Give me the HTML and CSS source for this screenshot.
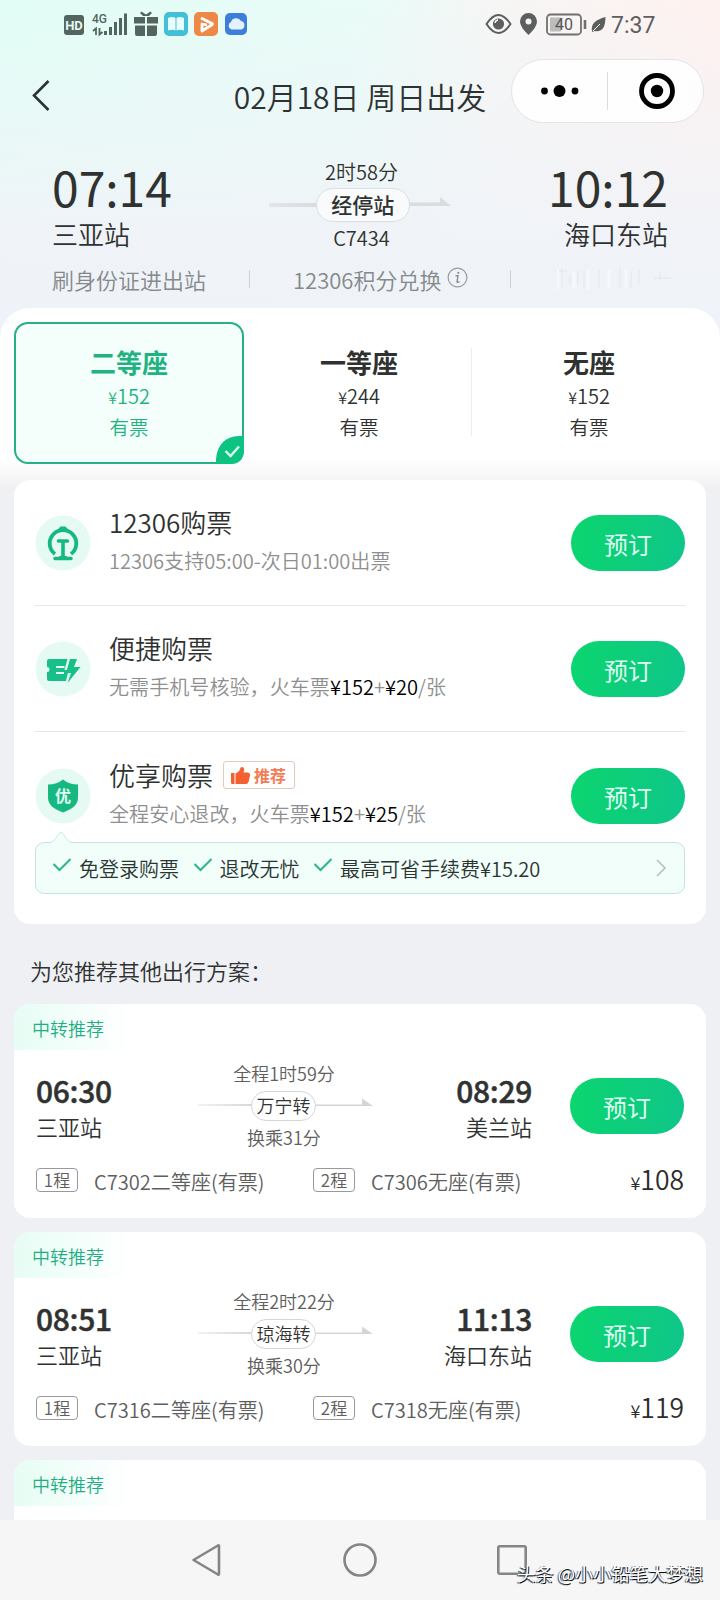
FILE: index.html
```html
<!DOCTYPE html>
<html lang="zh-CN">
<head>
<meta charset="utf-8">
<title>02月18日 周日出发</title>
<link rel="stylesheet" href="styles.css">
</head>
<body>
<div class="screen">
  <header class="top">
    <div class="status">
      <svg class="status-left" width="190" height="32" viewBox="60 8 190 32">
        <rect x="64" y="15" width="20" height="20" rx="3" fill="#54655f"/>
        <text x="74" y="29.5" class="hd" text-anchor="middle">HD</text>
        <text x="92" y="23" class="fourg">4G</text>
        <path d="M96 35v-6.500l-3 2.500M99.500 28v6.500l3-2.500" fill="none" stroke="#54655f" stroke-width="1.800"/>
        <path d="M105.500 35v-4M110.500 35v-8M115.500 35V22M120.500 35V18M125.500 35V13.500" stroke="#54655f" stroke-width="3"/>
        <g fill="#54655f"><path d="M134 17h11v6.500h-11zM147 17h11v6.500h-11zM135 25.500h10V36h-8q-2 0-2-2zM147 25.500h10V34q0 2-2 2h-8zM140 13l1.500-1.500 4.500 3 4.500-3L152 13l-3 3h-6z"/></g>
        <rect x="164" y="12" width="24" height="24" rx="5" fill="#42bfd4"/>
        <path d="M168 18q5-2 7.500 0v12.500q-3-1.500-7.500 0zM184 18q-5-2-7.500 0v12.500q3-1.500 7.500 0z" fill="#e9fdff"/>
        <rect x="194" y="12" width="24" height="24" rx="5" fill="#ed8846"/>
        <path d="M201 18l11 5.500q1 .5 0 1.200L202 31V24l5 1" fill="none" stroke="#fff" stroke-width="2.800" stroke-linejoin="round"/>
        <rect x="225" y="13" width="22" height="22" rx="5" fill="#3d7fd8"/>
        <path d="M231.500 29.500a4 4 0 0 1-.5-7.500 5.500 5.500 0 0 1 10-1 4.300 4.300 0 0 1-.5 8.500z" fill="#e4f2ff"/>
      </svg>
      <svg class="status-right" width="124" height="32" viewBox="484 8 124 32">
        <path d="M486.500 24q12-18 24 0q-12 18-24 0z" fill="none" stroke="#5d5f5e" stroke-width="2"/>
        <circle cx="498.500" cy="24" r="5.600" fill="#5d5f5e"/><path d="M495 23a3.500 3.500 0 0 1 3-3" stroke="#fff" stroke-width="1.300" fill="none"/>
        <path d="M528.500 35q-8.500-8-8.500-13.500a8.500 8.500 0 0 1 17 0q0 5.500-8.500 13.500z" fill="#5d5f5e"/><circle cx="528.500" cy="21.500" r="3" fill="#f5f7f6"/>
        <rect x="547" y="14.500" width="34" height="20" rx="3.500" fill="none" stroke="#6f706f" stroke-width="1.800"/>
        <rect x="550" y="17.500" width="11" height="14" fill="#bcbcbc"/>
        <text x="564" y="30.300" class="batt" text-anchor="middle">40</text>
        <path d="M585 20v9" stroke="#6f706f" stroke-width="2.600"/>
        <path d="M592 31q-2-10 13.500-14q0 16-11 14l-2 1z" fill="#5d5f5e"/><path d="M593 31l7-7" stroke="#f8f5f4" stroke-width="1"/>
      </svg>
      <span class="clock">7:37</span>
    </div>
    <div class="nav">
      <svg class="back" width="20" height="34" viewBox="0 0 20 34"><path d="M17.500 3L3 17.500 17.500 32" fill="none" stroke="#2b3432" stroke-width="2.600"/></svg>
      <h1 class="nav-title">02月18日 周日出发</h1>
      <div class="capsule">
        <svg width="95" height="40" viewBox="0 0 95 40"><g fill="#000"><circle cx="32.500" cy="20" r="3.400"/><circle cx="47.500" cy="20" r="6"/><circle cx="63" cy="20" r="3.400"/></g></svg>
        <i class="capsule-line"></i>
        <svg width="95" height="40" viewBox="0 0 95 40"><circle cx="49" cy="20" r="15.500" fill="none" stroke="#000" stroke-width="4.800"/><circle cx="49" cy="20" r="6.200"/></svg>
      </div>
    </div>
    <div class="trip">
      <div class="stop"><div class="stop-time">07:14</div><div class="stop-name">三亚站</div></div>
      <div class="route">
        <div class="route-text">2时58分</div>
        <div class="route-line">
          <i class="bar"></i><span class="route-pill">经停站</span>
          <svg width="41" height="12" viewBox="0 0 41 12"><path d="M0 6.500h30V1l11 9H0z" fill="#dadcdd"/></svg>
        </div>
        <div class="route-text">C7434</div>
      </div>
      <div class="stop end"><div class="stop-time">10:12</div><div class="stop-name">海口东站</div></div>
    </div>
    <div class="notes">
      <span>刷身份证进出站</span><i class="sep"></i><span>12306积分兑换</span>
      <svg class="info" width="21" height="21" viewBox="0 0 21 21"><circle cx="10.500" cy="10.500" r="9.400" fill="none" stroke="#999c9e" stroke-width="1.200"/><path d="M8.500 8.800h2.500l-1 6.200h2.500" fill="none" stroke="#8b8e90" stroke-width="1.400"/><circle cx="11.300" cy="5.800" r="1.100" fill="#8b8e90"/></svg>
      <i class="sep second"></i>
      <svg class="faded" width="120" height="28" viewBox="0 0 120 28"><path d="M4 6h12M11 3v20M19 9v12M27 6v15M33 5v18M48 5v17M69 3v20M80 7v16M88 5v14M103 13h18M109 6v9" stroke="#e6eaf0" stroke-width="1.300" fill="none"/><path d="M7 4v20M23 6v17M37 5v20M58 5v18M75 5v18" stroke="#f6f8fb" stroke-width="3"/></svg>
    </div>
  </header>

  <section class="seats">
    <div class="seat active"><b>二等座</b><span class="seat-price"><small>¥</small>152</span><span class="seat-left">有票</span>
      <svg class="picked" width="28" height="28" viewBox="0 0 28 28"><path d="M0 28V23Q2 1 23 0H28V14Q28 28 14 28z" fill="#0dc381"/><path d="M9.500 15l5 5L23 10.500" fill="none" stroke="#d8fff0" stroke-width="2.400"/></svg>
    </div>
    <div class="seat ruled"><b>一等座</b><span class="seat-price"><small>¥</small>244</span><span class="seat-left">有票</span></div>
    <div class="seat"><b>无座</b><span class="seat-price"><small>¥</small>152</span><span class="seat-left">有票</span></div>
  </section>

  <main class="content">
    <section class="card buy">
      <div class="buy-row">
        <svg class="buy-icon" viewBox="0 0 56 56"><circle cx="28" cy="28" r="27.500" fill="#e4faf2"/><path d="M20 39a13.300 13.300 0 1 1 16 0" fill="none" stroke="#16b882" stroke-width="3.800"/><path d="M23.500 26h9M28 26v16M20 43.500h16" fill="none" stroke="#16b882" stroke-width="3.600" stroke-linecap="round"/><path d="M24.500 41h7l2 3H22.500z" fill="#16b882"/><path d="M21.500 16l4-4.500h5l4 4.500z" fill="#16b882"/></svg>
        <div class="buy-main"><div class="buy-title">12306购票</div><div class="buy-sub">12306支持05:00-次日01:00出票</div></div>
        <button class="book">预订</button>
      </div>
      <div class="buy-row">
        <svg class="buy-icon" viewBox="0 0 56 56"><circle cx="28" cy="28" r="27.500" fill="#e4faf2"/><path d="M14 18H32.500L29.500 29H33.500L31 40H14Q12 40 12 38V31a2.500 2.500 0 0 0 0-5V20Q12 18 14 18z" fill="#16c088"/><path d="M35 18h7l-3 8h6.500L32.500 42l3.500-10h-5z" fill="#16c088"/><path d="M21 26h8.500M21 32h8" stroke="#e4faf2" stroke-width="2"/></svg>
        <div class="buy-main"><div class="buy-title">便捷购票</div><div class="buy-sub">无需手机号核验，火车票<em>¥152</em>+<em>¥20</em>/张</div></div>
        <button class="book">预订</button>
      </div>
      <div class="buy-row last">
        <svg class="buy-icon" viewBox="0 0 56 56"><circle cx="28" cy="28" r="27.500" fill="#e4faf2"/><path d="M28 11.500Q34 16.500 43 16.500V30Q43 39 28 44.500Q13 39 13 30V16.500Q22 16.500 28 11.500z" fill="#16b882"/><text x="28" y="34" class="shield" text-anchor="middle">优</text></svg>
        <div class="buy-main"><div class="buy-title">优享购票<span class="hot"><svg width="19" height="17" viewBox="0 0 19 17"><path d="M0 6h3.500v11H1.500Q0 17 0 15.500zM4.500 6.500Q8.500 4.500 9 2Q9.500-.5 12 .3Q14 1.500 12.500 5.500H17Q19.300 6 19 8.500L17.500 15Q17 17 15 17H4.500z" fill="#f4602f"/></svg>推荐</span></div><div class="buy-sub">全程安心退改，火车票<em>¥152</em>+<em>¥25</em>/张</div></div>
        <button class="book">预订</button>
      </div>
      <div class="perks">
        <svg class="beak" width="22" height="13" viewBox="0 0 22 13"><path d="M0 12Q4 11 6 7L9 2.500Q11 0 13 2.500L16 7Q18 11 22 12V13H0z" fill="#f1fefa"/><path d="M0 11.500Q4 11 6 7L9 2.500Q11 0 13 2.500L16 7Q18 11 22 11.500" fill="none" stroke="#c9eade"/></svg>
        <svg class="tick" viewBox="0 0 18 14"><path d="M.5 6l6 6L17.500 1" fill="none" stroke="#2fb78a" stroke-width="2"/></svg><span>免登录购票</span>
        <svg class="tick" viewBox="0 0 18 14"><path d="M.5 6l6 6L17.500 1" fill="none" stroke="#2fb78a" stroke-width="2"/></svg><span>退改无忧</span>
        <svg class="tick" viewBox="0 0 18 14"><path d="M.5 6l6 6L17.500 1" fill="none" stroke="#2fb78a" stroke-width="2"/></svg><span>最高可省手续费¥15.20</span>
        <svg class="more" width="10" height="18" viewBox="0 0 10 18"><path d="M1 1l8 8-8 8" fill="none" stroke="#b5c4bf" stroke-width="1.700"/></svg>
      </div>
    </section>

    <h2 class="more-title">为您推荐其他出行方案：</h2>

    <section class="card plan">
      <div class="ribbon">中转推荐</div>
      <div class="plan-main">
        <div class="leg"><b>06:30</b><span>三亚站</span></div>
        <div class="via"><span>全程1时59分</span><div class="via-line"><i class="fade"></i><em>万宁转</em><svg width="57" height="10" viewBox="0 0 57 10"><path d="M0 7.500h46V1.500l11 7.500H0z" fill="#d5d5d5"/></svg></div><span>换乘31分</span></div>
        <div class="leg end"><b>08:29</b><span>美兰站</span></div>
        <button class="book">预订</button>
      </div>
      <div class="plan-foot"><i>1程</i><span class="first">C7302二等座(有票)</span><i>2程</i><span>C7306无座(有票)</span><strong><small>¥</small>108</strong></div>
    </section>
    <section class="card plan">
      <div class="ribbon">中转推荐</div>
      <div class="plan-main">
        <div class="leg"><b>08:51</b><span>三亚站</span></div>
        <div class="via"><span>全程2时22分</span><div class="via-line"><i class="fade"></i><em>琼海转</em><svg width="57" height="10" viewBox="0 0 57 10"><path d="M0 7.500h46V1.500l11 7.500H0z" fill="#d5d5d5"/></svg></div><span>换乘30分</span></div>
        <div class="leg end"><b>11:13</b><span>海口东站</span></div>
        <button class="book">预订</button>
      </div>
      <div class="plan-foot"><i>1程</i><span class="first">C7316二等座(有票)</span><i>2程</i><span>C7318无座(有票)</span><strong><small>¥</small>119</strong></div>
    </section>
    <section class="card plan cut"><div class="ribbon">中转推荐</div></section>
  </main>

  <footer class="system">
    <svg width="32" height="36" viewBox="0 0 32 36"><path d="M3.500 18L28 3.500Q29 3 29 4V32Q29 33 28 32.500z" fill="none" stroke="#858585" stroke-width="2.600" stroke-linejoin="round"/></svg>
    <svg width="36" height="36" viewBox="0 0 36 36"><circle cx="19" cy="18" r="15.500" fill="none" stroke="#858585" stroke-width="2.600"/></svg>
    <svg width="32" height="36" viewBox="0 0 32 36"><rect x="2.300" y="4.300" width="27.400" height="27.400" rx="1.500" fill="none" stroke="#858585" stroke-width="2.600"/></svg>
    <div class="credit">头条 @小小铅笔大梦想</div>
  </footer>
</div>
</body>
</html>
```
FILE: styles.css
```css
* { box-sizing: border-box; margin: 0; padding: 0; }
body { width: 720px; height: 1600px; overflow: hidden; background: #eef0f4; color: #2f3231; font-family: "Noto Sans CJK SC", sans-serif; font-weight: 350; }
i, em { font-style: normal; }
svg { display: block; flex: none; }
.screen { width: 720px; height: 1600px; display: flex; flex-direction: column; overflow: hidden; }

.top { height: 342px; flex: none; background:
  linear-gradient(180deg, rgba(240,243,248,0) 0, rgba(240,243,248,.5) 130px, rgba(240,243,248,.95) 230px, #eff2f8 100%),
  linear-gradient(90deg, #e1fdf5 0, #e9fcf8 50%, #f6f6f5 69%, #fff2f0 100%); }
.status { height: 45px; display: flex; align-items: center; padding: 3px 64px 0 60px; }
.status-right { margin-left: 234px; }
.hd { font: 700 13px Roboto, sans-serif; fill: #e6faf4; }
.fourg { font: 500 12px Roboto, sans-serif; fill: #54655f; }
.batt { font: 400 16px Roboto, sans-serif; fill: #555; }
.clock { margin-left: 3px; padding-top: 3px; font: 400 23px/28px Roboto, sans-serif; color: #5e5e5e; }

.nav { height: 92px; position: relative; display: flex; align-items: center; justify-content: center; }
.back { position: absolute; left: 31px; top: 33px; }
.nav-title { font-size: 30px; font-weight: 350; line-height: 40px; padding-top: 9px; color: #2c3332; white-space: nowrap; }
.capsule { position: absolute; right: 16px; top: 14px; width: 193px; height: 64px; border: 1px solid #e4e4e4; border-radius: 32px; background: rgba(255,255,255,.85); display: flex; align-items: center; }
.capsule-line { width: 1px; height: 38px; background: #dcdcdc; }

.trip { margin-top: 21px; padding: 0 52px; display: grid; grid-template-columns: 1fr 182px 1fr; }
.stop-time { font-size: 48px; font-weight: 400; line-height: 56px; height: 56px; }
.stop-name { font-size: 26px; line-height: 40px; }
.end { text-align: right; }
.route { text-align: center; }
.route-text { font-size: 20px; line-height: 28px; padding-left: 3px; }
.route-line { height: 34px; margin: 2px 0; display: flex; align-items: center; }
.bar { width: 47px; height: 4px; background: linear-gradient(90deg, #e4e7ea, #d9dcde); }
.route-pill { width: 95px; height: 34px; border: 1px solid #dcdfe1; border-radius: 17px; background: #f8fafb; font-size: 21px; line-height: 30px; font-weight: 500; }
.route-line svg { margin-top: -6px; }
.notes { height: 44px; margin-top: 3px; padding-left: 52px; display: flex; align-items: center; font-size: 22px; line-height: 30px; color: #85898b; }
.sep { width: 1px; height: 18px; margin: 0 43px; background: #cfd3d6; }
.info { margin: -4px 0 0 6px; }
.sep.second { margin: 0 40px 0 42px; }

.seats { height: 180px; flex: none; margin-top: -34px; padding: 14px 16px 0 14px; display: grid; grid-template-columns: repeat(3, 230px); border-radius: 30px 30px 0 0; background: linear-gradient(180deg, #fff 150px, #f1f1f3 180px); }
.seat { position: relative; height: 142px; padding-top: 21px; display: flex; flex-direction: column; align-items: center; }
.seat b { font-size: 26px; line-height: 38px; }
.seat-price { font-size: 20px; line-height: 30px; }
.seat-price small { font-size: 16px; }
.seat-left { font-size: 19.500px; line-height: 29px; }
.seat.active { padding-top: 19px; border: 2px solid #25b087; border-radius: 14px; background: #f4fffb; color: #1fb382; }
.picked { position: absolute; right: -2px; bottom: -2px; }
.ruled::after { content: ""; position: absolute; right: 2px; top: 26px; width: 1px; height: 88px; background: #ededed; }

.content { flex: 1; min-height: 0; margin-top: -8px; padding: 0 14px; overflow: hidden; position: relative; }
.card { background: #fff; border-radius: 16px; overflow: hidden; }
.buy { height: 444px; padding: 0 21px; }
.buy-row { height: 126px; display: flex; align-items: center; border-bottom: 1px solid #e7e7e7; }
.buy-row.last { height: 127px; margin-bottom: -17px; border: 0; }
.buy-icon { width: 56px; height: 56px; }
.buy-main { flex: 1; margin-left: 18px; padding-bottom: 7px; white-space: nowrap; }
.buy-title { display: flex; align-items: center; font-size: 26px; line-height: 38px; }
.buy-sub { margin-top: 5px; font-size: 20.080px; line-height: 30px; color: #8f8f8f; }
.buy-sub em { color: #000; }
.book { flex: none; width: 114px; height: 56px; padding-top: 2px; border: 0; border-radius: 28px; background: linear-gradient(100deg, #0bd66e, #0fc58a); color: #dffff2; font: 400 24px/54px "Noto Sans CJK SC", sans-serif; }
.hot { margin: 1px 0 0 10px; width: 72px; height: 28px; border: 1px solid #e5c9bd; border-radius: 3px; display: flex; align-items: center; gap: 4px; padding-left: 7px; font-size: 16px; font-weight: 700; line-height: 24px; color: #f27d55; }
.shield { font: 700 16px "Noto Sans CJK SC", sans-serif; fill: #e0fff4; }
.perks { position: relative; height: 52px; padding: 0 18px 0 17px; border: 1px solid #c4e4d9; border-radius: 9px; background: #f1fefa; display: flex; align-items: center; font-size: 20px; line-height: 28px; color: #2a3531; }
.perks span { margin: 1px 14.500px 0 8px; }
.tick { width: 18px; height: 14px; margin-top: -6px; }
.more { margin-left: auto; }
.beak { position: absolute; left: 14px; top: -12px; }

.more-title { height: 80px; padding: 29px 0 0 16px; font-size: 22px; font-weight: 350; line-height: 34px; }
.plan { height: 214px; margin-bottom: 14px; }
.ribbon { width: 118px; height: 46px; padding-left: 18px; font-size: 18px; line-height: 49px; color: #1fae82; background: linear-gradient(90deg, #e6fdf4, #fff); }
.plan-main { height: 104px; padding: 0 22px; display: flex; }
.leg { width: 110px; padding-top: 24px; display: flex; flex-direction: column; }
.leg b { font-size: 30px; line-height: 32px; letter-spacing: -.3px; font-weight: 500; -webkit-text-stroke: .5px #2f3231; }
.leg span { font-size: 22px; line-height: 30px; margin-top: 5px; }
.via { width: 175px; margin-left: 52px; padding-top: 9px; text-align: center; font-size: 18px; line-height: 28px; color: #5e5e5e; display: flex; flex-direction: column; }
.via > span { padding-right: 3px; }
.via-line { height: 30px; margin: 4px 0 2px; display: flex; align-items: center; }
.fade { width: 53px; height: 2px; margin-top: -2px; background: linear-gradient(90deg, #f2f2f2, #d8d8d8); }
.via-line em { width: 65px; height: 30px; border: 1px solid #d6d6d6; border-radius: 15px; line-height: 27px; color: #333; }
.via-line svg { margin-top: -8px; }
.leg.end { margin-left: 49px; }
.plan-main .book { margin: 28px 0 0 38px; }
.plan-foot { display: flex; align-items: center; height: 52px; padding: 0 22px; font-size: 20.080px; line-height: 32px; color: #5e5e5e; }
.plan-foot i { width: 42px; height: 24px; border: 1px solid #999; border-radius: 4px; text-align: center; font-size: 17px; line-height: 21px; }
.plan-foot span { margin-left: 16px; padding-top: 3px; }
.plan-foot .first { width: 219px; }
.plan-foot strong { margin-left: auto; font-size: 26.500px; font-weight: 350; color: #2c2c2c; }
.plan-foot small { font-size: 18px; }

.system { position: relative; flex: none; height: 80px; padding: 0 192px 0 190px; background: #f6f6f6; display: flex; align-items: center; justify-content: space-between; }
.credit { position: absolute; right: 17px; bottom: 13px; font-size: 18.300px; font-weight: 400; line-height: 28px; color: #fff; text-shadow: 1px 1px 0 #111, -1px 1px 1px #444; white-space: nowrap; }
```
